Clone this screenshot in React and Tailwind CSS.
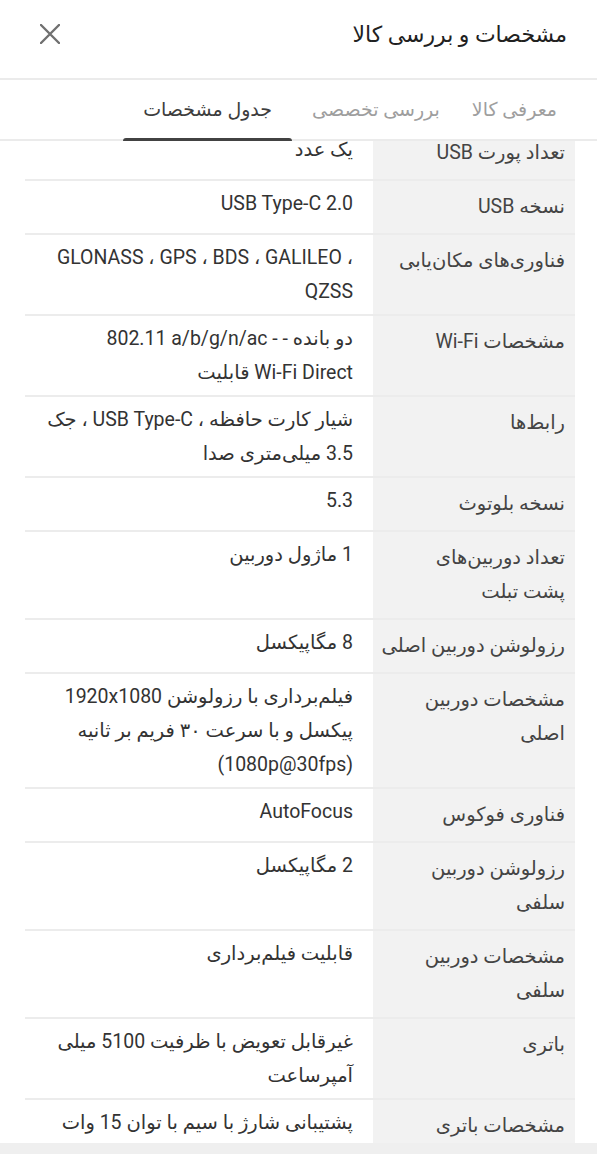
import React from 'react';

const rows = [
  { label: ['تعداد پورت USB'], value: ['یک عدد'] },
  { label: ['نسخه USB'], value: ['USB Type-C 2.0'] },
  {
    label: ['فناوری‌های مکان‌یابی'],
    value: [<span dir="ltr">GLONASS ، GPS ، BDS ، GALILEO ،</span>, 'QZSS'],
  },
  {
    label: ['مشخصات Wi-Fi'],
    value: [
      <>دو بانده <span dir="ltr">802.11 a/b/g/n/ac - -</span></>,
      <><span dir="ltr">Wi-Fi Direct</span> قابلیت</>,
    ],
  },
  { label: ['رابط‌ها'], value: ['شیار کارت حافظه ، USB Type-C ، جک', '3.5 میلی‌متری صدا'] },
  { label: ['نسخه بلوتوث'], value: ['5.3'] },
  { label: ['تعداد دوربین‌های', 'پشت تبلت'], value: ['1 ماژول دوربین'] },
  { label: ['رزولوشن دوربین اصلی'], value: ['8 مگاپیکسل'] },
  {
    label: ['مشخصات دوربین', 'اصلی'],
    value: ['فیلم‌برداری با رزولوشن 1920x1080', 'پیکسل و با سرعت ۳۰ فریم بر ثانیه', '(1080p@30fps)'],
  },
  { label: ['فناوری فوکوس'], value: ['AutoFocus'] },
  { label: ['رزولوشن دوربین', 'سلفی'], value: ['2 مگاپیکسل'] },
  { label: ['مشخصات دوربین', 'سلفی'], value: ['قابلیت فیلم‌برداری'] },
  { label: ['باتری'], value: ['غیرقابل تعویض با ظرفیت 5100 میلی', 'آمپرساعت'] },
  { label: ['مشخصات باتری'], value: ['پشتیبانی شارژ با سیم با توان 15 وات'] },
];

const Lines = ({ lines }) =>
  lines.map((line, i) => (
    <div key={i} className="whitespace-nowrap">
      {line}
    </div>
  ));

export default function App() {
  return (
    <div
      dir="rtl"
      className="w-[597px] h-[1154px] bg-white flex flex-col overflow-hidden"
      style={{ fontFamily: 'Roboto, "DejaVu Sans", sans-serif' }}
    >
      {/* Header */}
      <header className="h-[80px] flex-shrink-0 border-b-2 border-[#ebebeb] flex items-center justify-between pr-[30px] pl-[40px] pb-[10px]">
        <h1 className="text-[22px] font-medium text-[#212121]">مشخصات و بررسی کالا</h1>
        <button className="w-[20px] h-[20px] flex items-center justify-center">
          <svg width="20" height="20" viewBox="0 0 20 20">
            <path d="M1 1 L19 19 M19 1 L1 19" stroke="#707070" strokeWidth="2.4" strokeLinecap="round" />
          </svg>
        </button>
      </header>

      {/* Tabs */}
      <nav className="h-[61px] flex-shrink-0 border-b-2 border-[#ebebeb] flex items-stretch pr-[20px] text-[19px]">
        <button className="pr-5 pl-3 text-[#9e9e9e] pt-[2px]">معرفی کالا</button>
        <button className="px-5 text-[#9e9e9e] pt-[2px]">بررسی تخصصی</button>
        <button className="relative px-5 text-[#3d3d3d] font-medium pt-[2px]">
          جدول مشخصات
          <span className="absolute left-0 right-0 -bottom-[2px] h-[3px] bg-[#424242] rounded-t-sm" />
        </button>
      </nav>

      {/* Spec table */}
      <div className="flex-1 overflow-hidden pr-[22px] pl-[25px]">
        <div className="-mt-[14px]">
          {rows.map((row, i) => (
            <div key={i} className="flex border-b-2 border-[#ececec] text-[19.5px] leading-[34px]">
              <div className="w-[202px] flex-shrink-0 bg-[#f2f2f2] pr-[10px] pt-[9px] pb-[9px] text-[#444444]">
                <Lines lines={row.label} />
              </div>
              <div className="flex-1 pr-[20px] pl-2 pt-[6px] pb-[5px] text-[#333333]">
                <Lines lines={row.value} />
              </div>
            </div>
          ))}
        </div>
      </div>

      <div className="h-[11px] flex-shrink-0 bg-[#efefef]" />
    </div>
  );
}
